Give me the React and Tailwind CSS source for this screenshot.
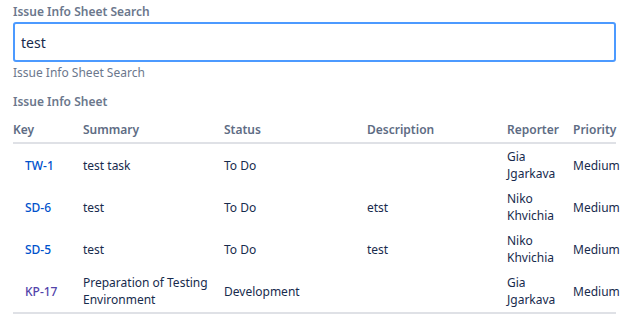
import React from "react";

const rows = [
  { key: "TW-1", summary: "test task", status: "To Do", desc: "", reporter: "Gia Jgarkava", priority: "Medium", visited: false },
  { key: "SD-6", summary: "test", status: "To Do", desc: "etst", reporter: "Niko Khvichia", priority: "Medium", visited: false },
  { key: "SD-5", summary: "test", status: "To Do", desc: "test", reporter: "Niko Khvichia", priority: "Medium", visited: false },
  { key: "KP-17", summary: "Preparation of Testing Environment", status: "Development", desc: "", reporter: "Gia Jgarkava", priority: "Medium", visited: true },
];

export default function App() {
  return (
    <div
      className="bg-white w-[634px] h-[334px] overflow-hidden"
      style={{ fontFamily: '"Noto Sans", "Open Sans", "Liberation Sans", sans-serif' }}
    >
      <div className="ml-[13px] w-[603px] pt-[4px]">
        <div className="text-[12px] leading-[16px] font-semibold text-[#6B778C]">Issue Info Sheet Search</div>
        <div className="mt-[2px] h-[40px] border-2 border-[#4C9AFF] rounded-[3px] bg-white flex items-center px-[6px]">
          <span className="text-[14px] text-[#172B4D]">test</span>
        </div>
        <div className="mt-[3px] text-[12px] leading-[16px] text-[#6B778C]">Issue Info Sheet Search</div>
        <div className="mt-[13px] text-[12px] leading-[16px] font-semibold text-[#6B778C]">Issue Info Sheet</div>
        <table className="mt-[8px] w-[603px] table-fixed border-collapse text-[12px] leading-[17px]">
          <colgroup>
            <col className="w-[70px]" />
            <col className="w-[141px]" />
            <col className="w-[143px]" />
            <col className="w-[140px]" />
            <col className="w-[66px]" />
            <col className="w-[43px]" />
          </colgroup>
          <thead>
            <tr className="border-b-2 border-[#DFE1E6]">
              {["Key", "Summary", "Status", "Description", "Reporter", "Priority"].map((h) => (
                <th
                  key={h}
                  className="text-left font-semibold text-[#5E6C84] pt-[3px] pb-[4px] pr-[4px] whitespace-nowrap"
                >
                  {h}
                </th>
              ))}
            </tr>
          </thead>
          <tbody className="border-b-2 border-[#DFE1E6]">
            {rows.map((r) => (
              <tr key={r.key} className="h-[42px]">
                <td className="pl-[12px] py-[4px] align-middle">
                  <span className={r.visited ? "font-medium text-[#5243AA]" : "font-medium text-[#0052CC]"}>{r.key}</span>
                </td>
                <td className="py-[4px] pr-[4px] align-middle text-[#172B4D]">{r.summary}</td>
                <td className="py-[4px] pr-[4px] align-middle text-[#172B4D]">{r.status}</td>
                <td className="py-[4px] pr-[4px] align-middle text-[#172B4D]">{r.desc}</td>
                <td className="py-[4px] pr-[4px] align-middle text-[#172B4D]">{r.reporter}</td>
                <td className="py-[4px] align-middle text-[#172B4D] whitespace-nowrap">{r.priority}</td>
              </tr>
            ))}
          </tbody>
        </table>
      </div>
    </div>
  );
}
